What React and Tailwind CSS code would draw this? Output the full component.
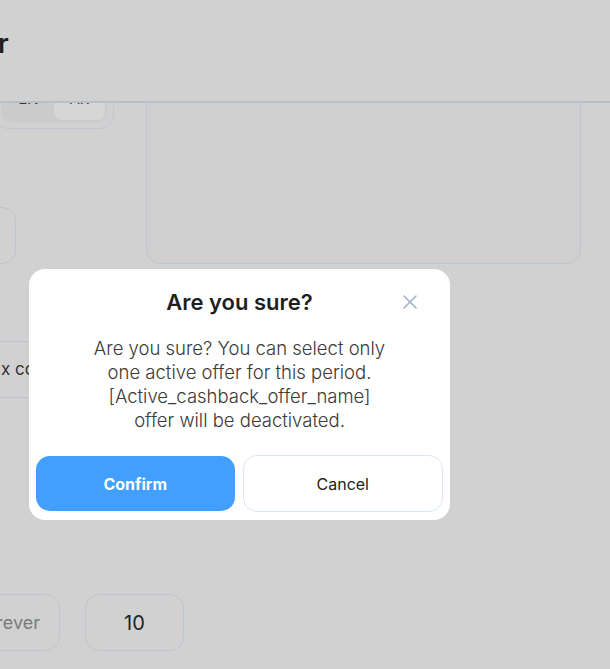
import { X } from 'lucide-react';

const font = { fontFamily: 'Inter, "Noto Sans", sans-serif' };

function ConfirmDialog() {
  return (
    <div className="absolute left-[29px] top-[269px] w-[421px] h-[251px] bg-white rounded-[16px] flex flex-col">
      {/* Title */}
      <div className="relative pt-[19px] flex justify-center">
        <h2 className="text-[22px] leading-[28px] font-semibold text-[#1f1f1f]">Are you sure?</h2>
        <button className="absolute right-[28px] top-[21px] text-[#a3b3c8]">
          <X size={24} strokeWidth={1.6} />
        </button>
      </div>

      {/* Body */}
      <p className="mt-[20px] text-center text-[18.5px] leading-[24px] font-light text-[#3a3a3a]">
        Are you sure? You can select only
        <br />
        one active offer for this period.
        <br />
        [Active_cashback_offer_name]
        <br />
        offer will be deactivated.
      </p>

      {/* Actions */}
      <div className="mt-auto px-[7px] pb-[8px] flex gap-[8px]">
        <button className="flex-1 h-[55px] rounded-[14px] bg-[#429ffd] text-white text-[16px] font-bold">
          Confirm
        </button>
        <button className="flex-1 h-[57px] -mt-[1px] rounded-[14px] bg-white border border-[#dbe6f1] text-[#222] text-[16px] font-normal">
          Cancel
        </button>
      </div>
    </div>
  );
}

export default function App() {
  return (
    <div className="relative w-[610px] h-[669px] overflow-hidden bg-[#d1d1d1] flex flex-col" style={font}>
      {/* Header (cut off on the left) */}
      <header className="h-[103px] shrink-0 border-b-2 border-[#b6c0c9] flex items-center relative z-10 bg-[#d1d1d1]">
        <span className="text-[27px] font-semibold text-[#1e1e1e] -ml-[2px] -mt-[12px]">r</span>
      </header>

      {/* Page content under the overlay */}
      <div className="flex-1 overflow-hidden -mt-[4px]">
        <div className="flex items-start">
          <div className="w-[146px] shrink-0 flex flex-col">
            {/* Language toggle */}
            <div className="-mt-[29px] -ml-[6px] w-[120px] h-[59px] rounded-[14px] border border-[#bfc8d1] p-[6px]">
              <div className="h-full rounded-[10px] bg-[#cbcbcb] flex p-[2px]">
                <div className="flex-1 flex items-center justify-center text-[15px] text-[#333]">EN</div>
                <div className="flex-1 flex items-center justify-center rounded-[8px] bg-[#d6d6d6] text-[15px] text-[#333]">AR</div>
              </div>
            </div>
            <div className="mt-[78px] -ml-[84px] w-[100px] h-[57px] rounded-[14px] border border-[#bcc6d0]" />
          </div>
          <div className="-mt-[12px] w-[435px] h-[177px] rounded-[14px] border border-[#bcc6d0] bg-[#cfcfcf]" />
        </div>

        <div className="mt-[77px] -ml-[16px] w-[420px] h-[57px] border border-[#bcc6d0] rounded-[14px] px-4 flex items-center text-[17px] text-[#333]">
          x code
        </div>

        <div className="mt-[196px] flex gap-[25px]">
          <div className="-ml-[40px] w-[100px] h-[57px] rounded-[14px] border border-[#bcc6d0] flex items-center justify-end pr-[19px] text-[18px] text-[#7a7a7a]">
            rever
          </div>
          <div className="w-[99px] h-[57px] rounded-[14px] border border-[#bcc6d0] flex items-center justify-center text-[20px] text-[#222]">
            10
          </div>
        </div>
      </div>

      <ConfirmDialog />
    </div>
  );
}
